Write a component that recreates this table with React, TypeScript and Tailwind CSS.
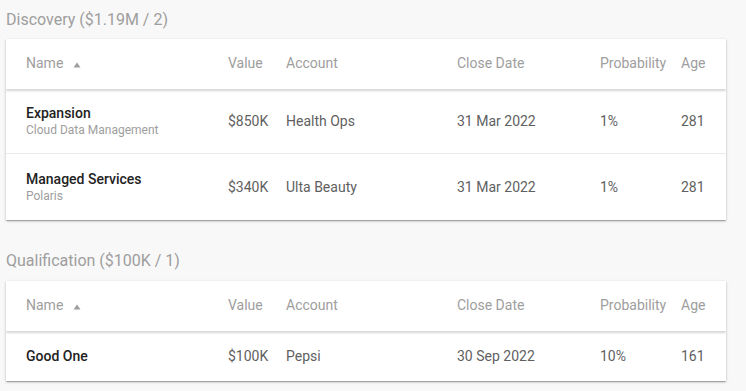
import React from "react";

type Row = { name: string; sub?: string; value: string; account: string; date: string; prob: string; age: string };

const cols = ["w-[202px]", "w-[58px]", "w-[171px]", "w-[143px]", "w-[81px]", "flex-1"];

function Header() {
  return (
    <div className="relative z-10 flex h-[50px] items-center pl-[20px] pb-[1px] text-[14px] text-[#9e9e9e] shadow-[0_2px_2px_rgba(0,0,0,0.16)]">
      <div className={`${cols[0]} flex items-center`}>
        <span>Name</span>
        <svg className="ml-[10px] mt-[2px]" width="8" height="6" viewBox="0 0 8 6">
          <polygon points="4,0.5 7.5,5.5 0.5,5.5" fill="#9e9e9e" />
        </svg>
      </div>
      <div className={cols[1]}>Value</div>
      <div className={cols[2]}>Account</div>
      <div className={cols[3]}>Close Date</div>
      <div className={cols[4]}>Probability</div>
      <div className={cols[5]}>Age</div>
    </div>
  );
}

function DataRow({ r, h, border }: { r: Row; h: string; border: boolean }) {
  return (
    <div className={`flex items-center pl-[20px] text-[14px] text-[#5f5f5f] ${h} ${border ? "border-b border-[#ebebeb]" : ""}`}>
      <div className={`${cols[0]} flex flex-col`}>
        <span className={`font-medium text-[#222] leading-[17px] ${r.sub ? "mt-[1px]" : ""}`}>{r.name}</span>
        {r.sub && <span className="text-[12px] leading-[17px] text-[#9e9e9e]">{r.sub}</span>}
      </div>
      <div className={cols[1]}>{r.value}</div>
      <div className={cols[2]}>{r.account}</div>
      <div className={cols[3]}>{r.date}</div>
      <div className={cols[4]}>{r.prob}</div>
      <div className={cols[5]}>{r.age}</div>
    </div>
  );
}

export default function App() {
  const disc: Row[] = [
    { name: "Expansion", sub: "Cloud Data Management", value: "$850K", account: "Health Ops", date: "31 Mar 2022", prob: "1%", age: "281" },
    { name: "Managed Services", sub: "Polaris", value: "$340K", account: "Ulta Beauty", date: "31 Mar 2022", prob: "1%", age: "281" },
  ];
  const qual: Row[] = [
    { name: "Good One", value: "$100K", account: "Pepsi", date: "30 Sep 2022", prob: "10%", age: "161" },
  ];
  return (
    <div className="min-h-[391px] w-[746px] bg-[#f8f8f8] px-[6px] pt-[10px]" style={{ fontFamily: "Roboto, 'Liberation Sans', sans-serif" }}>
      <div className="text-[16px] leading-[20px] text-[#9e9e9e] mb-[9px]">Discovery ($1.19M / 2)</div>
      <div className="w-[720px] overflow-hidden bg-white shadow-[0_1px_3px_rgba(0,0,0,0.2),0_1px_1px_rgba(0,0,0,0.14),0_2px_1px_-1px_rgba(0,0,0,0.12)]">
        <Header />
        <DataRow r={disc[0]} h="h-[65px]" border />
        <DataRow r={disc[1]} h="h-[66px]" border={false} />
      </div>
      <div className="mt-[31px] text-[16px] leading-[20px] text-[#9e9e9e] mb-[10px]">Qualification ($100K / 1)</div>
      <div className="w-[720px] overflow-hidden bg-white shadow-[0_1px_3px_rgba(0,0,0,0.2),0_1px_1px_rgba(0,0,0,0.14),0_2px_1px_-1px_rgba(0,0,0,0.12)]">
        <Header />
        <DataRow r={qual[0]} h="h-[50px]" border={false} />
      </div>
    </div>
  );
}
